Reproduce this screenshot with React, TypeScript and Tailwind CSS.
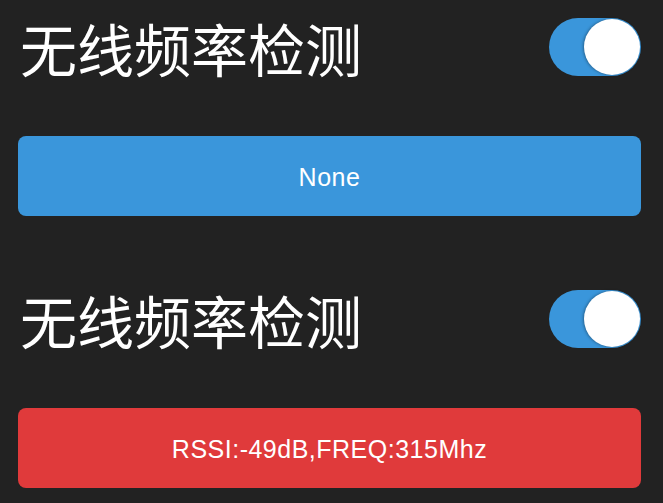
import React, { useState } from 'react';

interface Detector {
    label: string;
    status: string;
    color: string;
}

const detectors: Detector[] = [
    { label: '无线频率检测', status: 'None', color: 'bg-[#3a96db]' },
    { label: '无线频率检测', status: 'RSSI:-49dB,FREQ:315Mhz', color: 'bg-[#e03a3b]' },
];

const Toggle: React.FC<{ on: boolean; onChange: () => void }> = ({ on, onChange }) => (
    <button
        onClick={onChange}
        className={`relative w-[92px] h-[58px] rounded-full ${on ? 'bg-[#3a96db]' : 'bg-[#555]'}`}
    >
        <span
            className={`absolute top-[1px] h-[56px] w-[56px] rounded-full bg-white shadow-[-1px_0_3px_rgba(0,0,0,0.35)] ${on ? 'right-[1px]' : 'left-[1px]'}`}
        />
    </button>
);

const App: React.FC = () => {
    const [enabled, setEnabled] = useState([true, true]);

    return (
        <div className="min-h-[503px] w-full bg-[#222222] pl-[18px] pr-[22px] pt-[18px]">
            {detectors.map((d, i) => (
                <div key={i} className={i > 0 ? 'mt-[74px]' : ''}>
                    {/* Header row */}
                    <div className="flex h-[58px] items-center justify-between">
                        <span
                            className="ml-[2px] text-[57px] leading-none text-white"
                            style={{ fontFamily: '"Noto Sans CJK SC", sans-serif' }}
                        >
                            {d.label}
                        </span>
                        <Toggle
                            on={enabled[i]}
                            onChange={() => setEnabled(enabled.map((v, j) => (j === i ? !v : v)))}
                        />
                    </div>

                    {/* Status bar */}
                    <div
                        className={`mt-[60px] flex h-[80px] items-center justify-center rounded-[8px] pt-[3px] ${d.color} text-[25px] tracking-[0.5px] text-white`}
                        style={{ fontFamily: '"Liberation Sans", Arial, sans-serif' }}
                    >
                        {d.status}
                    </div>
                </div>
            ))}
        </div>
    );
};

export default App;
